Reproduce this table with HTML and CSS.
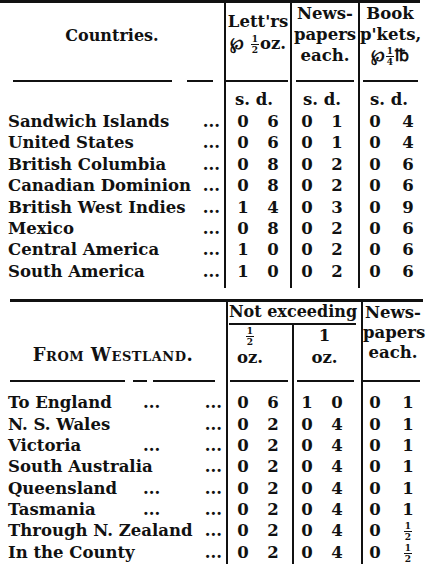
FILE: index.html
```html
<!DOCTYPE html>
<html>
<head>
<meta charset="utf-8">
<link rel="stylesheet" href="styles.css">
</head>
<body>
<div class="sheet">
  <div class="rule-top"></div>

  <div class="t1">
    <div class="row hdr1">
      <div class="c0 h-title">Countries.</div>
      <div class="n hc hc1">Lett'rs<br>℘ <span class="frac"><span class="num">1</span><span class="den">2</span></span>oz.</div>
      <div class="n hc">News-<br>papers<br>each.</div>
      <div class="n hc">Book<br>p'kets,<br>℘<span class="frac"><span class="num">1</span><span class="den">4</span></span>℔</div>
    </div>
    <div class="row rules1">
      <div class="c0 segs"><span class="seg s-a"></span><span class="seg s-b"></span></div>
      <div class="n"><span class="seg r1"></span></div>
      <div class="n"><span class="seg r2"></span></div>
      <div class="n"><span class="seg r3"></span></div>
    </div>
    <div class="row sd">
      <div class="c0"></div>
      <div class="n sd1">s. d.</div>
      <div class="n sd2">s. d.</div>
      <div class="n sd3">s. d.</div>
    </div>

    <div class="row data"><div class="c0 name"><span>Sandwich Islands</span><span class="dots">...</span></div><div class="n v a1"><span>0</span><span>6</span></div><div class="n v a2"><span>0</span><span>1</span></div><div class="n v a3"><span>0</span><span>4</span></div></div>
    <div class="row data"><div class="c0 name"><span>United States</span><span class="dots">...</span></div><div class="n v a1"><span>0</span><span>6</span></div><div class="n v a2"><span>0</span><span>1</span></div><div class="n v a3"><span>0</span><span>4</span></div></div>
    <div class="row data"><div class="c0 name"><span>British Columbia</span><span class="dots">...</span></div><div class="n v a1"><span>0</span><span>8</span></div><div class="n v a2"><span>0</span><span>2</span></div><div class="n v a3"><span>0</span><span>6</span></div></div>
    <div class="row data"><div class="c0 name"><span>Canadian Dominion</span><span class="dots">...</span></div><div class="n v a1"><span>0</span><span>8</span></div><div class="n v a2"><span>0</span><span>2</span></div><div class="n v a3"><span>0</span><span>6</span></div></div>
    <div class="row data"><div class="c0 name"><span>British West Indies</span><span class="dots">...</span></div><div class="n v a1"><span>1</span><span>4</span></div><div class="n v a2"><span>0</span><span>3</span></div><div class="n v a3"><span>0</span><span>9</span></div></div>
    <div class="row data"><div class="c0 name"><span>Mexico</span><span class="dots">...</span></div><div class="n v a1"><span>0</span><span>8</span></div><div class="n v a2"><span>0</span><span>2</span></div><div class="n v a3"><span>0</span><span>6</span></div></div>
    <div class="row data"><div class="c0 name"><span>Central America</span><span class="dots">...</span></div><div class="n v a1"><span>1</span><span>0</span></div><div class="n v a2"><span>0</span><span>2</span></div><div class="n v a3"><span>0</span><span>6</span></div></div>
    <div class="row data last"><div class="c0 name"><span>South America</span><span class="dots">...</span></div><div class="n v a1"><span>1</span><span>0</span></div><div class="n v a2"><span>0</span><span>2</span></div><div class="n v a3"><span>0</span><span>6</span></div></div>
  </div>

  <div class="rule-mid"></div>

  <div class="t2">
    <div class="hdr2">
      <div class="c0 h-west">From Westland.</div>
      <div class="n ne">
        <div class="ne-title">Not exceeding</div>
        <div class="ne-rule"></div>
        <div class="ne-sub">
          <div class="ne-a"><span class="frac big"><span class="num">1</span><span class="den">2</span></span><br>oz.</div>
          <div class="ne-b">1<br>oz.</div>
        </div>
      </div>
      <div class="n hc hc-news">News-<br>papers<br>each.</div>
    </div>
    <div class="row rules2">
      <div class="c0 segs"><span class="seg s-c"></span><span class="seg s-d"></span><span class="seg s-e"></span></div>
      <div class="n"><span class="seg q1"></span></div>
      <div class="n"><span class="seg q2"></span></div>
      <div class="n"><span class="seg q3"></span></div>
    </div>

    <div class="row data"><div class="c0 name"><span class="w">To England</span><span class="dots-mid">...</span><span class="dots">...</span></div><div class="n v b1"><span>0</span><span>6</span></div><div class="n v b2"><span>1</span><span>0</span></div><div class="n v b3"><span>0</span><span>1</span></div></div>
    <div class="row data"><div class="c0 name"><span>N. S. Wales</span><span class="dots">...</span></div><div class="n v b1"><span>0</span><span>2</span></div><div class="n v b2"><span>0</span><span>4</span></div><div class="n v b3"><span>0</span><span>1</span></div></div>
    <div class="row data"><div class="c0 name"><span class="w">Victoria</span><span class="dots-mid">...</span><span class="dots">...</span></div><div class="n v b1"><span>0</span><span>2</span></div><div class="n v b2"><span>0</span><span>4</span></div><div class="n v b3"><span>0</span><span>1</span></div></div>
    <div class="row data"><div class="c0 name"><span>South Australia</span><span class="dots">...</span></div><div class="n v b1"><span>0</span><span>2</span></div><div class="n v b2"><span>0</span><span>4</span></div><div class="n v b3"><span>0</span><span>1</span></div></div>
    <div class="row data"><div class="c0 name"><span class="w">Queensland</span><span class="dots-mid">...</span><span class="dots">...</span></div><div class="n v b1"><span>0</span><span>2</span></div><div class="n v b2"><span>0</span><span>4</span></div><div class="n v b3"><span>0</span><span>1</span></div></div>
    <div class="row data"><div class="c0 name"><span class="w">Tasmania</span><span class="dots-mid">...</span><span class="dots">...</span></div><div class="n v b1"><span>0</span><span>2</span></div><div class="n v b2"><span>0</span><span>4</span></div><div class="n v b3"><span>0</span><span>1</span></div></div>
    <div class="row data"><div class="c0 name"><span>Through N. Zealand</span><span class="dots">...</span></div><div class="n v b1"><span>0</span><span>2</span></div><div class="n v b2"><span>0</span><span>4</span></div><div class="n v b3"><span>0</span><span><span class="frac mid"><span class="num">1</span><span class="den">2</span></span></span></div></div>
    <div class="row data"><div class="c0 name"><span>In the County</span><span class="dots">...</span></div><div class="n v b1"><span>0</span><span>2</span></div><div class="n v b2"><span>0</span><span>4</span></div><div class="n v b3"><span>0</span><span><span class="frac mid"><span class="num">1</span><span class="den">2</span></span></span></div></div>
  </div>
</div>
</body>
</html>
```

FILE: styles.css
```css
html, body {
  margin: 0;
  padding: 0;
  background: #ffffff;
}

body {
  color: #111111;
  font-family: "DejaVu Serif", "Liberation Serif", serif;
  font-weight: bold;
  font-size: 16.5px;
}

.sheet {
  width: 431px;
  height: 569px;
  overflow: hidden;
}

.rule-top {
  width: 420px;
  height: 3px;
  background: #111;
}

.rule-mid {
  width: 413px;
  height: 3px;
  margin: 11px 0 0 10px;
  background: #111;
}

.row {
  display: grid;
  grid-template-columns: 224px 66px 68px 62px;
}

.t2 .row {
  grid-template-columns: 226px 66px 69px 62px;
}

.n {
  border-left: 2px solid #111;
  white-space: nowrap;
}

/* top header */
.hdr1 {
  height: 68px;
}

.h-title {
  display: flex;
  align-items: center;
  justify-content: center;
  padding-bottom: 4px;
  font-size: 16px;
}

.hc {
  text-align: center;
  line-height: 21px;
}

.hc1 {
  padding-top: 8px;
  line-height: 22px;
}

.frac {
  display: inline-flex;
  flex-direction: column;
  align-items: center;
  vertical-align: middle;
  font-size: 9px;
  line-height: 10px;
  margin: 0 1px;
}

.frac .num {
  border-bottom: 1px solid #111;
  padding: 0 1px;
}

/* rule bands */
.rules1 {
  height: 18px;
}

.rules2 {
  height: 20px;
}

.seg {
  display: block;
  height: 2px;
  background: #111;
}

.rules1 .seg {
  margin-top: 9px;
}

.rules2 .seg {
  margin-top: 8px;
}

.segs {
  display: flex;
  align-items: flex-start;
}

.s-a { width: 159px; margin-left: 13px; }
.s-b { width: 26px; margin-left: 15px; }
.r1 { margin-left: 0; margin-right: 2px; }
.r2 { margin-left: 4px; margin-right: 4px; }
.r3 { margin-left: 3px; margin-right: 2px; }

.s-c { width: 115px; margin-left: 10px; }
.s-d { width: 14px; margin-left: 8px; }
.s-e { width: 62px; margin-left: 6px; }
.q1 { margin-left: 2px; margin-right: 4px; }
.q2 { margin-left: 3px; margin-right: 7px; }
.q3 { margin-left: 0; margin-right: 3px; }

/* s. d. row */
.sd {
  height: 22px;
  line-height: 22px;
}

.sd1 { padding-left: 9px; }
.sd2 { padding-left: 11px; }
.sd3 { padding-left: 10px; }

/* data rows */
.data {
  height: 21.4px;
  line-height: 21.4px;
}

.data.last {
  height: 27.4px;
}

.name {
  display: flex;
  padding-left: 8px;
  padding-right: 4px;
  white-space: nowrap;
}

.name .dots {
  margin-left: auto;
}

.name .w {
  width: 135px;
  flex: none;
}

.v {
  display: grid;
  text-align: center;
}

.a1 { grid-template-columns: 30px 30px; padding-left: 2px; }
.a2 { grid-template-columns: 30px 30px; }
.a3 { grid-template-columns: 30px 36px; }

.b1 { grid-template-columns: 30px 30px; }
.b2 { grid-template-columns: 26px 34px; }
.b3 { grid-template-columns: 24px 42px; }

/* bottom header */
.hdr2 {
  display: grid;
  grid-template-columns: 226px 135px 62px;
  height: 70px;
}

.h-west {
  text-align: center;
  font-variant: small-caps;
  font-size: 18px;
  letter-spacing: 0.5px;
  line-height: 21px;
  padding-top: 42px;
}

.ne {
  display: flex;
  flex-direction: column;
}

.ne-title {
  line-height: 20px;
  font-size: 16px;
  text-align: center;
  padding-right: 3px;
}

.ne-rule {
  height: 2px;
  margin: 1px 5px 0 1px;
  background: #111;
}

.ne-sub {
  flex: 1;
  display: grid;
  grid-template-columns: 64px 1fr;
  line-height: 22px;
  text-align: center;
}

.ne-a {
  padding-right: 20px;
}

.ne-b {
  border-left: 2px solid #111;
  padding-right: 6px;
}

.hc-news {
  line-height: 20px;
  padding-top: 1px;
}
```
